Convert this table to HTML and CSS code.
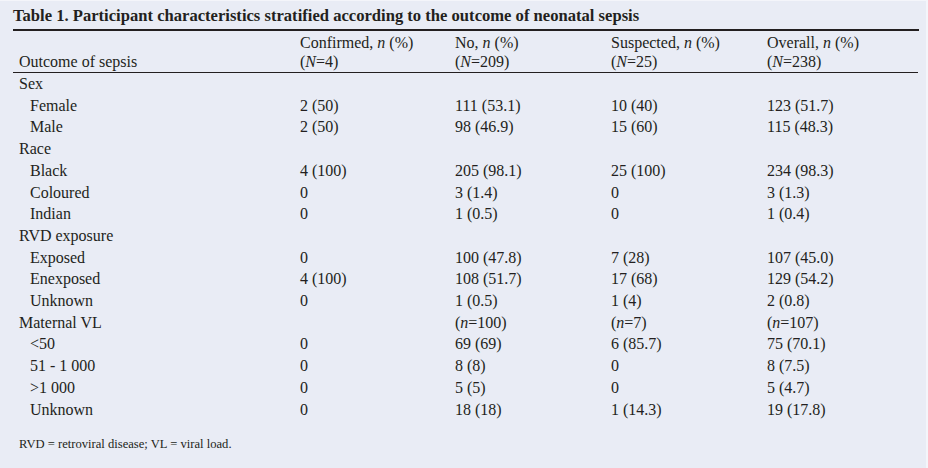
FILE: index.html
```html
<!DOCTYPE html>
<html lang="en">
<head>
<meta charset="utf-8">
<title>Table 1</title>
<link rel="stylesheet" href="styles.css">
</head>
<body>
<div class="sheet">
  <div class="title">Table 1. Participant characteristics stratified according to the outcome of neonatal sepsis</div>
  <table class="data">
    <colgroup>
      <col class="c-label"><col class="c1"><col class="c2"><col class="c3"><col class="c4">
    </colgroup>
    <thead>
      <tr>
        <th class="lab">Outcome of sepsis</th>
        <th>Confirmed, <i>n</i> (%)<br>(<i>N</i>=4)</th>
        <th>No, <i>n</i> (%)<br>(<i>N</i>=209)</th>
        <th>Suspected, <i>n</i> (%)<br>(<i>N</i>=25)</th>
        <th>Overall, <i>n</i> (%)<br>(<i>N</i>=238)</th>
      </tr>
    </thead>
    <tbody>
      <tr><td class="grp">Sex</td><td></td><td></td><td></td><td></td></tr>
      <tr><td class="sub">Female</td><td>2 (50)</td><td>111 (53.1)</td><td>10 (40)</td><td>123 (51.7)</td></tr>
      <tr><td class="sub">Male</td><td>2 (50)</td><td>98 (46.9)</td><td>15 (60)</td><td>115 (48.3)</td></tr>
      <tr><td class="grp">Race</td><td></td><td></td><td></td><td></td></tr>
      <tr><td class="sub">Black</td><td>4 (100)</td><td>205 (98.1)</td><td>25 (100)</td><td>234 (98.3)</td></tr>
      <tr><td class="sub">Coloured</td><td>0</td><td>3 (1.4)</td><td>0</td><td>3 (1.3)</td></tr>
      <tr><td class="sub">Indian</td><td>0</td><td>1 (0.5)</td><td>0</td><td>1 (0.4)</td></tr>
      <tr><td class="grp">RVD exposure</td><td></td><td></td><td></td><td></td></tr>
      <tr><td class="sub">Exposed</td><td>0</td><td>100 (47.8)</td><td>7 (28)</td><td>107 (45.0)</td></tr>
      <tr><td class="sub">Enexposed</td><td>4 (100)</td><td>108 (51.7)</td><td>17 (68)</td><td>129 (54.2)</td></tr>
      <tr><td class="sub">Unknown</td><td>0</td><td>1 (0.5)</td><td>1 (4)</td><td>2 (0.8)</td></tr>
      <tr><td class="grp">Maternal VL</td><td></td><td>(<i>n</i>=100)</td><td>(<i>n</i>=7)</td><td>(<i>n</i>=107)</td></tr>
      <tr><td class="sub">&lt;50</td><td>0</td><td>69 (69)</td><td>6 (85.7)</td><td>75 (70.1)</td></tr>
      <tr><td class="sub">51 - 1 000</td><td>0</td><td>8 (8)</td><td>0</td><td>8 (7.5)</td></tr>
      <tr><td class="sub">&gt;1 000</td><td>0</td><td>5 (5)</td><td>0</td><td>5 (4.7)</td></tr>
      <tr><td class="sub">Unknown</td><td>0</td><td>18 (18)</td><td>1 (14.3)</td><td>19 (17.8)</td></tr>
    </tbody>
  </table>
  <p class="note">RVD = retroviral disease; VL = viral load.</p>
</div>
</body>
</html>
```

FILE: styles.css
```css
html, body {
  margin: 0;
  padding: 0;
}
body {
  background: #e9ecf5;
  color: #231f20;
  font-family: "Liberation Serif", "Times New Roman", serif;
  width: 928px;
  height: 468px;
  overflow: hidden;
}
.sheet {
  box-sizing: border-box;
  width: 928px;
  height: 468px;
  padding: 5px 9px 0 13px;
  border-top: 1px solid #f4f5fa;
  border-right: 2px solid #f4f5fa;
}
.title {
  font-weight: bold;
  font-size: 16.6px;
  line-height: 20px;
  padding-bottom: 3px;
  border-bottom: 2px solid #231f20;
  width: 906px;
  white-space: nowrap;
}
.data {
  border-collapse: collapse;
  table-layout: fixed;
  width: 905px;
  font-size: 16px;
}
.c-label { width: 287px; }
.c1 { width: 155px; }
.c2 { width: 156px; }
.c3 { width: 156px; }
.c4 { width: 151px; }
.data th {
  font-weight: normal;
  text-align: left;
  vertical-align: bottom;
  line-height: 19px;
  padding: 2px 0 1px 0;
  border-bottom: 1px solid #231f20;
}
.data th.lab {
  padding-left: 6px;
}
.data td {
  padding: 0;
  height: 21.7px;
  line-height: 21.7px;
  vertical-align: middle;
  white-space: nowrap;
}
.data td.grp { padding-left: 6px; }
.data td.sub { padding-left: 17px; }
.note {
  margin: 16px 0 0 6px;
  font-size: 12.6px;
  line-height: 16px;
}
```
